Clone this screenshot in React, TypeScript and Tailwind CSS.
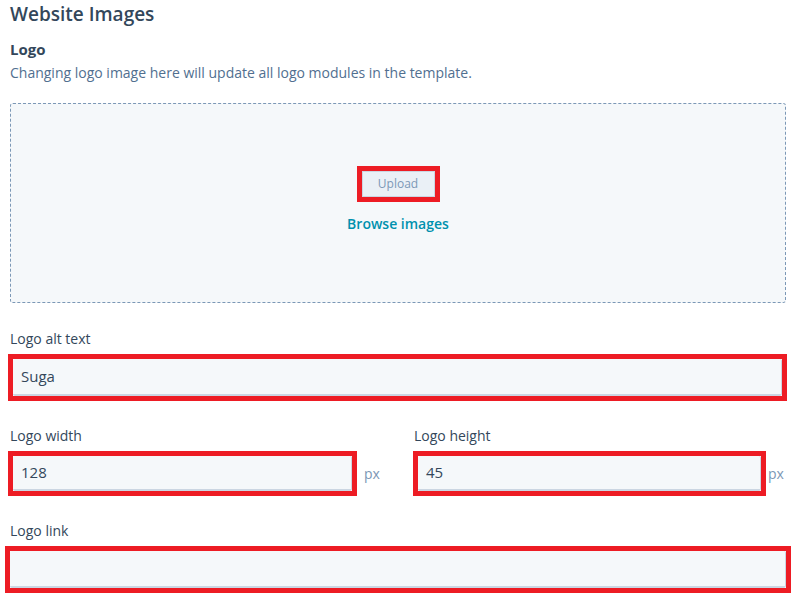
import React from "react";

const font = { fontFamily: "'Open Sans', Lato, sans-serif" };

function Field({ value, className }: { value?: string; className: string }) {
  return (
    <div className={`border-[5px] border-[#ed1c24] ${className}`}>
      <div className="h-full w-full bg-[#f5f8fa] border-r border-b-2 border-[#cbd6e2] rounded-[2px] flex items-center pl-[8px] text-[15px] text-[#33475b]">
        {value}
      </div>
    </div>
  );
}

export default function App() {
  return (
    <div className="w-[798px] h-[607px] bg-white overflow-hidden text-[#33475b]" style={font}>
      <div className="pl-[10px] pt-[1px]">
        <h1 className="text-[19px] leading-[26px] font-semibold">Website Images</h1>
        <h2 className="mt-[12px] text-[15px] leading-[20px] font-bold">Logo</h2>
        <p className="mt-[4px] text-[14px] leading-[20px] text-[#516f90]">
          Changing logo image here will update all logo modules in the template.
        </p>
        <div className="mt-[20px] w-[776px] h-[200px] border border-dashed border-[#7c98b6] rounded-[3px] bg-[#f5f8fa] flex flex-col items-center pt-[62px]">
          <div className="border-[5px] border-[#ed1c24] w-[83px] h-[36px]">
            <div className="h-full w-full bg-[#eaf0f6] border border-[#cbd6e2] flex items-center justify-center text-[12px] text-[#7c98b6]">
              Upload
            </div>
          </div>
          <div className="mt-[11px] text-[14px] font-semibold text-[#0091ae]">Browse images</div>
        </div>
      </div>

      <div className="mt-[27px] pl-[10px] text-[14px] leading-[18px]">Logo alt text</div>
      <Field value="Suga" className="ml-[8px] mt-[6px] w-[779px] h-[47px]" />

      <div className="mt-[26px] flex">
        <div className="w-[405px] flex flex-col">
          <div className="pl-[10px] text-[14px] leading-[18px]">Logo width</div>
          <div className="mt-[6px] flex items-center">
            <Field value="128" className="ml-[8px] w-[349px] h-[45px]" />
            <span className="ml-[7px] text-[14px] text-[#7c98b6]">px</span>
          </div>
        </div>
        <div className="flex flex-col">
          <div className="pl-[9px] text-[14px] leading-[18px]">Logo height</div>
          <div className="mt-[6px] flex items-center">
            <Field value="45" className="ml-[8px] w-[353px] h-[45px]" />
            <span className="ml-[2px] text-[14px] text-[#7c98b6]">px</span>
          </div>
        </div>
      </div>

      <div className="mt-[26px] pl-[10px] text-[14px] leading-[18px]">Logo link</div>
      <Field className="ml-[5px] mt-[6px] w-[786px] h-[47px]" />
    </div>
  );
}
